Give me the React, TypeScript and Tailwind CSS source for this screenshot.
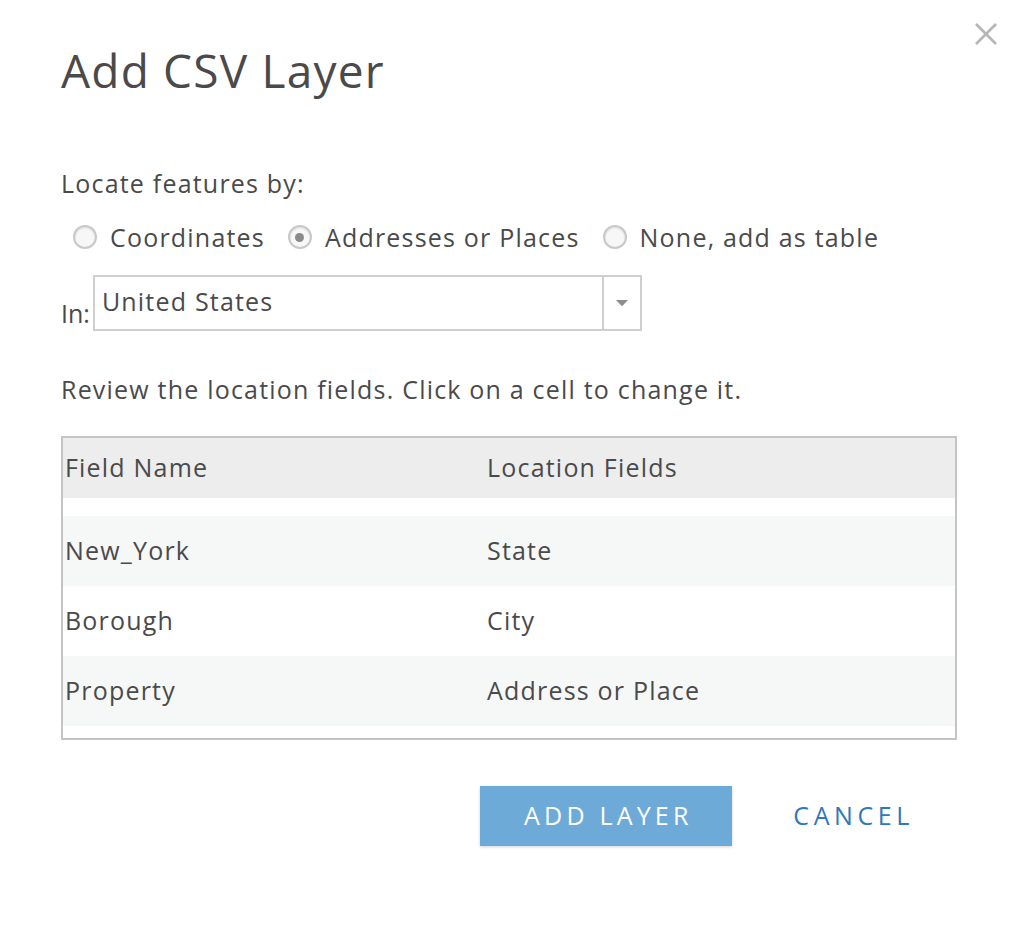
import React from "react";

const rows = [
  { field: "New_York", location: "State" },
  { field: "Borough", location: "City" },
  { field: "Property", location: "Address or Place" },
];

function Radio({ checked, label }: { checked?: boolean; label: string }) {
  return (
    <label className="flex items-center gap-[13px]">
      <span className="flex h-[24px] w-[24px] items-center justify-center rounded-full border-2 border-[#c8c8c8] bg-[#f7f7f7] shadow-[inset_0_1px_2px_rgba(0,0,0,0.12)]">
        {checked && <span className="h-[9px] w-[9px] rounded-full bg-[#8a8a8a]" />}
      </span>
      <span>{label}</span>
    </label>
  );
}

export default function App() {
  return (
    <div className="relative h-[936px] w-[1020px] bg-white font-['Open_Sans','Liberation_Sans',sans-serif] text-[#4a4a4a]">
      <button className="absolute right-[22px] top-[22px] h-[24px] w-[24px] text-[#b5b5b5]" aria-label="Close">
        <svg viewBox="0 0 24 24" className="h-full w-full" fill="none" stroke="currentColor" strokeWidth="2.6">
          <path d="M2 2 L22 22 M22 2 L2 22" />
        </svg>
      </button>

      <div className="px-[61px] pt-[40px]">
        <h1 className="text-[46px] leading-[60px] tracking-[1.2px] text-[#4a4a4a]">Add CSV Layer</h1>

        <div className="text-[25px] tracking-[1.2px]">
          <p className="mt-[68px] leading-[30px]">Locate features by:</p>

          <div className="mt-[24px] flex items-center gap-[23px] pl-[12px] leading-[30px]">
            <Radio label="Coordinates" />
            <Radio checked label="Addresses or Places" />
            <Radio label="None, add as table" />
          </div>

          <div className="mt-[23px] flex items-end">
            <span className="pb-[3px] leading-[30px] tracking-normal">In:</span>
            <div className="ml-[3px] flex h-[56px] w-[549px] border-2 border-[#cfcfcf]">
              <div className="flex-1 px-[7px] pt-[9px] leading-[30px]">United States</div>
              <div className="flex w-[38px] items-center justify-center border-l-2 border-[#cfcfcf]">
                <svg viewBox="0 0 14 8" className="h-[7px] w-[14px]">
                  <path d="M0 0 H14 L7 7 Z" fill="#8e8e8e" />
                </svg>
              </div>
            </div>
          </div>

          <p className="mt-[43px] leading-[30px]">Review the location fields. Click on a cell to change it.</p>

          <div className="mt-[32px] w-[896px] border-2 border-[#c4c4c4] pb-[12px]">
            <div className="grid h-[60px] grid-cols-[424px_1fr] items-center bg-[#ededed]">
              <span className="pl-[2px]">Field Name</span>
              <span>Location Fields</span>
            </div>
            <div className="h-[18px]" />
            {rows.map((r, i) => (
              <div
                key={r.field}
                className={`grid h-[70px] grid-cols-[424px_1fr] items-center ${i % 2 === 0 ? "bg-[#f6f7f7]" : "bg-white"}`}
              >
                <span className="pl-[2px]">{r.field}</span>
                <span>{r.location}</span>
              </div>
            ))}
          </div>
        </div>

        <div className="mt-[46px] flex items-center justify-end gap-[61px] pr-[45px]">
          <button className="h-[60px] w-[252px] bg-[#6eaad8] pl-[4px] text-[25px] tracking-[4.2px] text-white shadow-[0_1px_3px_rgba(0,0,0,0.18)]">
            ADD LAYER
          </button>
          <button className="text-[25px] tracking-[4.6px] text-[#2f78b9]">CANCEL</button>
        </div>
      </div>
    </div>
  );
}
